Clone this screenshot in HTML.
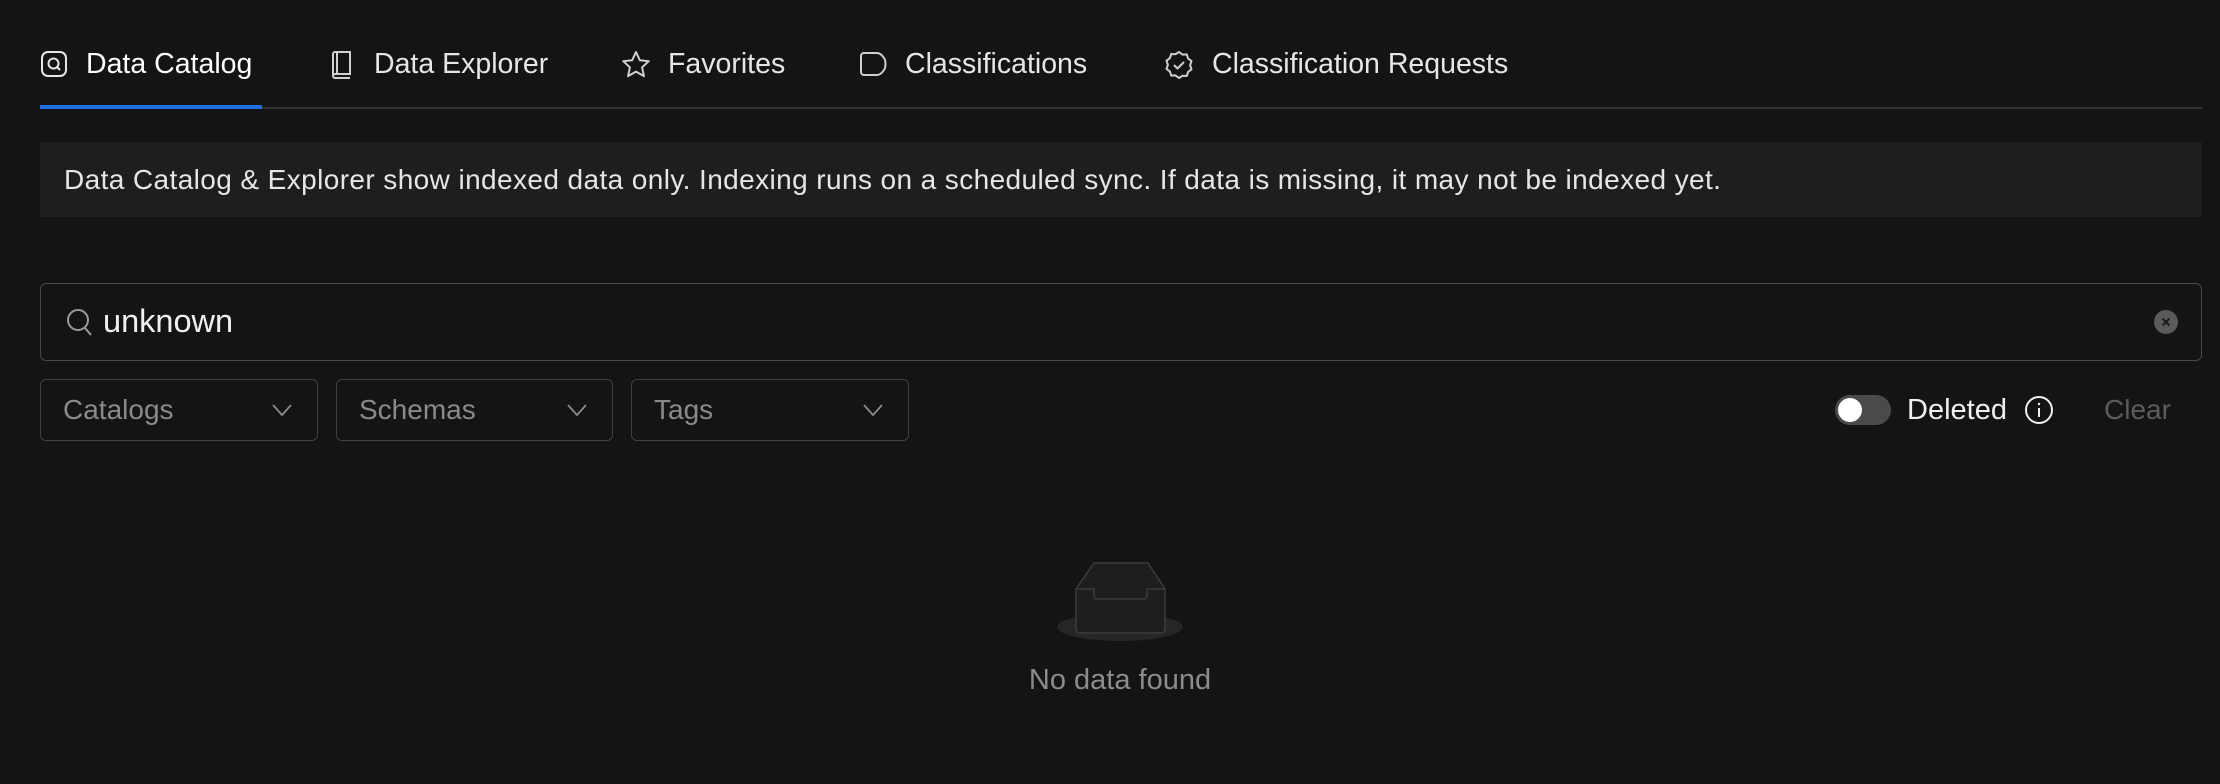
<!DOCTYPE html>
<html><head><meta charset="utf-8"><style>
*{margin:0;padding:0;box-sizing:border-box}
body{width:2220px;height:784px;background:#141414;font-family:"Liberation Sans",sans-serif;color:#e6e6e6;position:relative;overflow:hidden}
.abs{position:absolute}
.tab{position:absolute;top:46px;font-size:28.5px;line-height:36px;white-space:nowrap}
.ic{position:absolute;top:50px}
.dd{position:absolute;top:379px;height:62px;border:1.5px solid #424242;border-radius:6px;font-size:28px;color:#8a8a8a;line-height:59px;padding-left:22px}
.dd svg{position:absolute;right:24px;top:20px}
</style></head><body>
<svg class="ic" style="left:40px" width="28" height="28" viewBox="0 0 28 28" fill="none" stroke="#e6e6e6" stroke-width="2"><rect x="2" y="2" width="24" height="24" rx="6"/><circle cx="13.5" cy="13.5" r="5"/><path d="M17 17l3 3"/></svg>
<div class="tab" style="left:86px;color:#fff">Data Catalog</div>
<svg class="ic" style="left:329px" width="26" height="30" viewBox="0 0 26 30" fill="none" stroke="#d0d0d0" stroke-width="2"><path d="M4 25V4a2 2 0 0 1 2-2h15v22H6a2 2 0 0 0 0 4h15"/><path d="M8 2v22"/></svg>
<div class="tab" style="left:374px">Data Explorer</div>
<svg class="ic" style="left:621px" width="30" height="30" viewBox="0 0 30 30" fill="none" stroke="#d0d0d0" stroke-width="2" stroke-linejoin="round"><path d="M15 2l3.8 8.2 8.9 1-6.6 6.1 1.8 8.8L15 21.6 7.1 26.1l1.8-8.8-6.6-6.1 8.9-1z"/></svg>
<div class="tab" style="left:668px">Favorites</div>
<svg class="ic" style="left:858px" width="30" height="28" viewBox="0 0 30 28" fill="none" stroke="#d0d0d0" stroke-width="2"><path d="M3 6a3 3 0 0 1 3-3h13c3 0 5 2 7 5s2 9 0 12-4 5-7 5H6a3 3 0 0 1-3-3z"/></svg>
<div class="tab" style="left:905px">Classifications</div>
<svg class="ic" style="left:1164px" width="30" height="30" viewBox="0 0 30 30" fill="none" stroke="#d0d0d0" stroke-width="2" stroke-linejoin="round"><path d="M15 2l3.5 2.6 4.3-.2 1.3 4.1 3.4 2.6-1.4 4.1 1.4 4.1-3.4 2.6-1.3 4.1-4.3-.2L15 28l-3.5-2.6-4.3.2-1.3-4.1-3.4-2.6 1.4-4.1-1.4-4.1 3.4-2.6 1.3-4.1 4.3.2z"/><path d="M10 15l3.5 3.5L20 12"/></svg>
<div class="tab" style="left:1212px">Classification Requests</div>
<div class="abs" style="left:40px;top:107px;width:2162px;height:2px;background:#333"></div>
<div class="abs" style="left:40px;top:105px;width:222px;height:4px;background:#1f6fe0"></div>
<div class="abs" style="left:40px;top:142px;width:2162px;height:75px;background:#1e1e1e;font-size:28px;letter-spacing:0.4px;line-height:75px;padding-left:24px;color:#e6e6e6;white-space:nowrap">Data Catalog &amp; Explorer show indexed data only. Indexing runs on a scheduled sync. If data is missing, it may not be indexed yet.</div>
<div class="abs" style="left:40px;top:283px;width:2162px;height:78px;border:1.5px solid #4a4a4a;border-radius:6px"></div>
<svg class="abs" style="left:66px;top:308px" width="28" height="30" viewBox="0 0 28 30" fill="none" stroke="#9a9a9a" stroke-width="2"><circle cx="12" cy="12" r="10"/><path d="M19 20l6 7"/></svg>
<div class="abs" style="left:103px;top:301px;font-size:32.5px;line-height:40px;color:#f0f0f0">unknown</div>
<svg class="abs" style="left:2154px;top:310px" width="24" height="24" viewBox="0 0 24 24"><circle cx="12" cy="12" r="12" fill="#5a5a5a"/><path d="M8.5 8.5l7 7M15.5 8.5l-7 7" stroke="#1a1a1a" stroke-width="2"/></svg>
<div class="dd" style="left:40px;width:278px">Catalogs<svg width="22" height="20" viewBox="0 0 22 20" fill="none" stroke="#8a8a8a" stroke-width="1.8"><path d="M2 5l9 10 9-10"/></svg></div>
<div class="dd" style="left:336px;width:277px">Schemas<svg width="22" height="20" viewBox="0 0 22 20" fill="none" stroke="#8a8a8a" stroke-width="1.8"><path d="M2 5l9 10 9-10"/></svg></div>
<div class="dd" style="left:631px;width:278px">Tags<svg width="22" height="20" viewBox="0 0 22 20" fill="none" stroke="#8a8a8a" stroke-width="1.8"><path d="M2 5l9 10 9-10"/></svg></div>
<div class="abs" style="left:1835px;top:395px;width:56px;height:30px;border-radius:15px;background:#4a4a4a"></div>
<div class="abs" style="left:1838px;top:398px;width:24px;height:24px;border-radius:12px;background:#fff"></div>
<div class="abs" style="left:1907px;top:392px;font-size:29px;line-height:36px;color:#f0f0f0">Deleted</div>
<svg class="abs" style="left:2024px;top:395px" width="30" height="30" viewBox="0 0 30 30" fill="none" stroke="#f0f0f0" stroke-width="2"><circle cx="15" cy="15" r="13"/><path d="M15 13v9"/><circle cx="15" cy="9" r="1.2" fill="#f0f0f0" stroke="none"/></svg>
<div class="abs" style="left:2104px;top:392px;font-size:28px;line-height:36px;color:#5c5c5c">Clear</div>
<svg class="abs" style="left:1056px;top:560px" width="128" height="86" viewBox="0 0 128 86"><ellipse cx="64" cy="67" rx="63" ry="14" fill="#262626"/><path d="M38 3h54l17 26v40a4 4 0 0 1-4 4H24a4 4 0 0 1-4-4V29z" fill="#1e1e1e" stroke="#3c3c3c" stroke-width="1.5"/><path d="M20 29h18v7a3 3 0 0 0 3 3h47a3 3 0 0 0 3-3v-7h18" fill="none" stroke="#3c3c3c" stroke-width="1.5"/></svg>
<div class="abs" style="left:0;width:2240px;top:662px;text-align:center;font-size:29px;line-height:36px;color:#8c8c8c">No data found</div>
</body></html>
